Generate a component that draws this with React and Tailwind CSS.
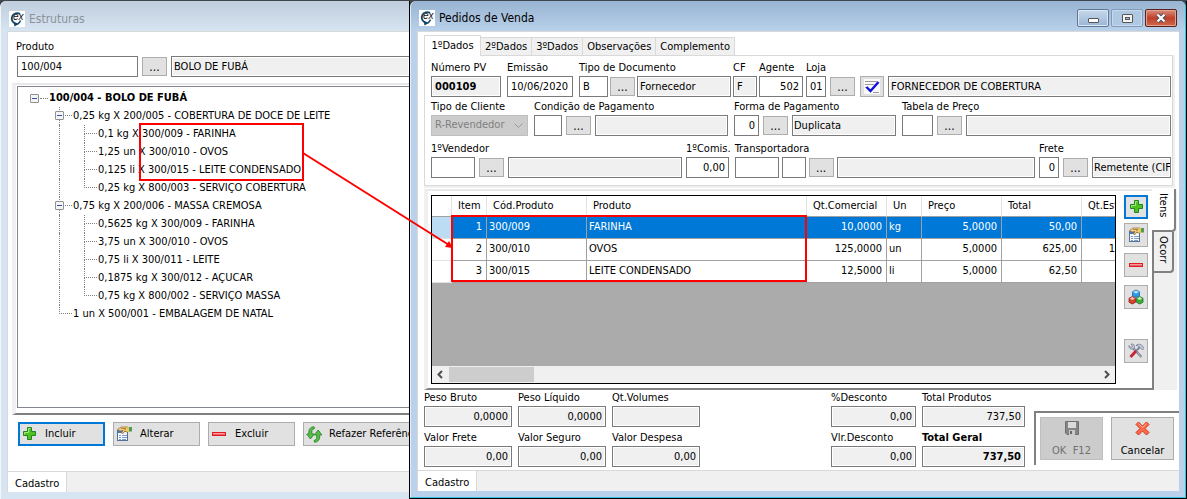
import React, { useId } from 'react';

const tree = [
  { level: 1, open: true, text: '0,25 kg X 200/005 - COBERTURA DE DOCE DE LEITE' },
  { level: 2, text: '0,1 kg X 300/009 - FARINHA' },
  { level: 2, text: '1,25 un X 300/010 - OVOS' },
  { level: 2, text: '0,125 li X 300/015 - LEITE CONDENSADO' },
  { level: 2, last: true, text: '0,25 kg X 800/003 - SERVIÇO COBERTURA' },
  { level: 1, open: true, text: '0,75 kg X 200/006 - MASSA CREMOSA' },
  { level: 2, text: '0,5625 kg X 300/009 - FARINHA' },
  { level: 2, text: '3,75 un X 300/010 - OVOS' },
  { level: 2, text: '0,75 li X 300/011 - LEITE' },
  { level: 2, text: '0,1875 kg X 300/012 - AÇUCAR' },
  { level: 2, last: true, text: '0,75 kg X 800/002 - SERVIÇO MASSA' },
  { level: 1, last: true, text: '1 un X 500/001 - EMBALAGEM DE NATAL' },
];

const items = [
  { item: 1, cod: '300/009', produto: 'FARINHA', qt: '10,0000', un: 'kg', preco: '5,0000', total: '50,00', est: '' },
  { item: 2, cod: '300/010', produto: 'OVOS', qt: '125,0000', un: 'un', preco: '5,0000', total: '625,00', est: '1' },
  { item: 3, cod: '300/015', produto: 'LEITE CONDENSADO', qt: '12,5000', un: 'li', preco: '5,0000', total: '62,50', est: '' },
];

/* ---------- icons ---------- */

function LogoIcon() {
  return (
    <svg width="16" height="16" viewBox="0 0 16 16" className="shrink-0 bg-white">
      <path d="M11 2.800A5.300 5.300 0 1 0 5.500 12.300" fill="none" stroke="#12466b" strokeWidth="1.800" />
      <path d="M4.500 10.500 10 13l-4.500 2.500z" fill="#12466b" />
      <path d="M11.500 9.500a5 5 0 0 1-3 3.500" fill="none" stroke="#12466b" strokeWidth="1.400" />
      <text x="4" y="9" fontSize="10" fontStyle="italic" fontFamily="Liberation Sans, sans-serif" fill="#111">ex</text>
    </svg>
  );
}

function PlusIcon() {
  return (
    <svg width="16" height="16" viewBox="0 0 16 16" className="shrink-0">
      <path d="M6.500 1.500h4v4h4v4h-4v4h-4v-4h-4v-4h4z" fill="#4fc21f" stroke="#1f8423" />
      <path d="M7.500 2.500h2M7.500 2.500v4h-4v2" fill="none" stroke="#a5e884" />
    </svg>
  );
}

function MinusIcon() {
  return (
    <svg width="16" height="16" viewBox="0 0 16 16" className="shrink-0">
      <rect x="1.500" y="6.500" width="13" height="3" fill="#f4606a" stroke="#e01b24" />
      <path d="M2 7.500h12" stroke="#ff9ca0" />
    </svg>
  );
}

function EditIcon() {
  return (
    <svg width="16" height="16" viewBox="0 0 16 16" className="shrink-0">
      <rect x="1.500" y="5.500" width="10" height="9" fill="#f4f8ff" stroke="#5a6f96" />
      <rect x="1" y="4" width="7" height="3" fill="#4a75b5" />
      <path d="M3 9.500h2M3 11.500h2M6 9.500h5M6 11.500h5M6 13.500h4M3 13.500h2" stroke="#7d9ccb" />
      <path d="M1.500 3.500 5 1h7v4.500L10.500 6 9 5 6.500 8 5.500 7 7 4.500 4 5z" fill="#f2d08c" />
      <path d="M1.500 3.500 5 1h7M12 5.500 10.500 6 9 5 6.500 8 5.500 7 7 4.500 4 5 1.500 3.500" fill="none" stroke="#8f6a26" strokeWidth=".7" />
      <path d="m5 3 1-1 1 1 1-1 1 1 1-1M8 4l2-1" fill="none" stroke="#8a5a1c" strokeWidth=".6" />
      <path d="M13 1h3v4.500h-3z" fill="#4d9a63" />
      <path d="M12 1v5" stroke="#f4c61f" strokeWidth="1.600" />
    </svg>
  );
}

function RefreshIcon() {
  return (
    <svg width="17" height="17" viewBox="0 0 17 17" className="shrink-0">
      <path d="M8 .8C4.500 .8 2.500 3 2.800 8H.7L4.400 13l4-5H6C5.500 5 6 3 8.500 2.500z" fill="#55bd45" stroke="#27802a" strokeWidth=".8" />
      <path d="M8.500 16.200c3.500 0 5.500-2.200 5.200-7.200h2.200l-3.700-5-4 5h2.400c.5 3-.1 5-2.600 5.500z" fill="#55bd45" stroke="#27802a" strokeWidth=".8" />
    </svg>
  );
}

function CubesIcon() {
  return (
    <svg width="16" height="16" viewBox="0 0 16 16" className="shrink-0">
      <path d="m8 1 3.500 1.800v4L8 8.500 4.500 6.800v-4z" fill="#2d9bea" stroke="#1766a8" strokeWidth=".8" />
      <path d="m8 1.500 3 1.500-3 1.500L5 3z" fill="#b5e2ff" />
      <path d="m4.300 7.500 3.300 1.800v3.900L4.300 15 1 13.200V9.300z" fill="#d9412c" stroke="#8e2016" strokeWidth=".8" />
      <path d="m4.300 8 2.700 1.400-2.700 1.500-2.700-1.500z" fill="#ffc2b5" />
      <path d="m11.700 7.500 3.300 1.800v3.900L11.700 15l-3.300-1.800V9.300z" fill="#38ae39" stroke="#1a701f" strokeWidth=".8" />
      <path d="m11.700 8 2.700 1.400-2.700 1.500L9 9.400z" fill="#c2f2b5" />
    </svg>
  );
}

function ToolsIcon() {
  return (
    <svg width="16" height="16" viewBox="0 0 16 16" className="shrink-0">
      <path d="m4 4 9.500 10" stroke="#66718a" strokeWidth="2.200" />
      <path d="m4 4 9.500 10" stroke="#d5dbe5" strokeWidth=".8" />
      <path d="M1 2.500 3 4.500 4.500 3 3 1c2-.5 4 1 3.500 3.500L4.500 6C2.500 6.500 .5 5 1 2.500z" fill="#c5cddb" stroke="#66718a" strokeWidth=".7" />
      <path d="m12 4-4.500 4.500" stroke="#7c879c" strokeWidth="2" />
      <path d="M8 8 2.500 14" stroke="#ca2432" strokeWidth="2.800" />
      <path d="M8 2.500C10 .5 13 1 14.500 3L16 5.500 14.500 7 12 4.500 10.500 3z" fill="#c5cddb" stroke="#66718a" strokeWidth=".7" />
    </svg>
  );
}

function CheckIcon() {
  return (
    <svg width="16" height="15" viewBox="0 0 16 15" className="shrink-0">
      <rect width="16" height="15" fill="#fafafa" />
      <path d="M1 2.500h12M1 5.500h9M1 8.500h3M9 13.500h6" stroke="#9a9a9a" />
      <path d="m2.500 8 4 4L14.500 3" fill="none" stroke="#1111dd" strokeWidth="2.400" />
    </svg>
  );
}

function SaveIcon() {
  return (
    <svg width="14" height="14" viewBox="0 0 14 14">
      <path d="M.5.5h13v13H2L.5 12z" fill="#858585" stroke="#707070" />
      <rect x="3" y="1" width="8" height="6" fill="#dadada" />
      <rect x="4" y="9" width="6" height="5" fill="#c9c9c9" />
      <rect x="5" y="10" width="2" height="3" fill="#666" />
    </svg>
  );
}

function CancelIcon() {
  return (
    <svg width="15" height="15" viewBox="0 0 15 15">
      <path d="m3.500 1 4 4 4-4L14 3.500l-4 4 4 4-2.500 2.500-4-4-4 4L1 11.500l4-4-4-4z" fill="#fb6a4c" stroke="#d8331c" />
      <path d="m3.500 2.500 4 4 4-4" fill="none" stroke="#ffb19a" />
    </svg>
  );
}

/* ---------- form pieces ---------- */

const inputBase = 'h-[21px] min-w-0 border border-[#7a7a7a] px-[3px] text-[11px] leading-4 outline-none';

function Box({ className = '', gray, ...props }) {
  return (
    <input
      type="text"
      readOnly={gray}
      className={`${inputBase} ${gray ? 'bg-[#f0f0f0] shadow-[inset_0_0_0_1px_#fff]' : 'bg-white'} ${className}`}
      {...props}
    />
  );
}

function Dots({ label, className = '' }) {
  return (
    <button type="button" aria-label={label} className={`h-[19px] w-[25px] shrink-0 border border-[#adadad] bg-[#e1e1e1] text-[12px] leading-4 ${className}`}>
      ...
    </button>
  );
}

function Field({ label, value = '', gray, w, className = '', gap = 'gap-1', bold, boldLabel, right, children }) {
  const id = useId();
  return (
    <div className={`flex flex-col ${className}`}>
      <label htmlFor={id} className={`h-4 whitespace-nowrap leading-4 ${boldLabel ? 'font-bold' : ''}`}>
        {label}
      </label>
      <div className={`flex items-center ${gap}`}>
        <Box id={id} defaultValue={value} gray={gray} className={`shrink-0 ${w} ${bold ? 'font-bold' : ''} ${right ? 'text-right' : ''}`} />
        {children}
      </div>
    </div>
  );
}

function SideButton({ label, active, className = '', children }) {
  return (
    <button
      type="button"
      aria-label={label}
      className={`flex h-6 w-6 items-center justify-center bg-[#e1e1e1] ${active ? 'border-2 border-[#0078d7]' : 'border border-[#adadad]'} ${className}`}
    >
      {children}
    </button>
  );
}

function ActionButton({ label, active, children }) {
  return (
    <button
      type="button"
      className={`flex h-6 w-[87px] shrink-0 items-center gap-2 whitespace-nowrap bg-[#e1e1e1] ${active ? 'border-2 border-[#0078d7] px-[1px]' : 'border border-[#adadad] px-[2px]'}`}
    >
      {children}
      {label}
    </button>
  );
}

function BottomTab() {
  return (
    <div className="flex h-[21px] border-t border-[#d9d9d9] bg-[#f0f0f0]">
      <button type="button" className="border-r border-[#d9d9d9] bg-white px-[7px] pt-1 leading-4">Cadastro</button>
    </div>
  );
}

/* ---------- tree ---------- */

function Toggle({ className = '' }) {
  return (
    <button type="button" aria-label="Recolher" className={`flex h-[9px] w-[9px] shrink-0 items-center justify-center rounded-[1px] border border-[#919191] bg-[#f4f4f4] ${className}`}>
      <span className="h-px w-[5px] bg-[#3b4fa8]" />
    </button>
  );
}

function TreeRow({ node }) {
  return (
    <li className="flex h-[18px] items-center whitespace-nowrap pl-[41px]">
      {node.level === 2 && <span className="h-full w-[25px] shrink-0 border-l border-dotted border-[#808080]" />}
      <span className="relative flex h-full w-[13px] shrink-0 flex-col">
        <span className="h-[9px] border-b border-l border-dotted border-[#808080]" />
        <span className={`h-[9px] border-dotted border-[#808080] ${node.last ? '' : 'border-l'}`} />
        {node.open && <Toggle className="absolute -left-1 top-1" />}
      </span>
      <span className="pl-px">{node.text}</span>
    </li>
  );
}

function Estruturas() {
  return (
    <section className="flex min-w-0 flex-col overflow-hidden rounded-tl-md border-l border-[#f2f6fa] bg-[#d7e4f2] pb-[7px] pl-[6px]">
      <header className="-ml-[6px] flex h-[30px] shrink-0 items-center gap-1 bg-linear-to-b from-[#bfcddc] to-[#d7e4f2] pl-2 pt-[6px] text-[12px] text-[#8b929a]">
        <LogoIcon />
        Estruturas
      </header>
      <div className="flex flex-1 flex-col border-l border-t border-[#d9d9d9] bg-white">
        <div className="flex flex-col pl-2 pt-[7px]">
          <label htmlFor="produto" className="h-[17px] leading-4">Produto</label>
          <div className="flex items-center gap-1 pl-px">
            <Box id="produto" defaultValue="100/004" className="w-[121px] shrink-0" />
            <Dots label="Buscar produto" />
            <Box aria-label="Descrição do produto" gray defaultValue="BOLO DE FUBÁ" className="flex-1 border-r-0 pl-[2px]" />
          </div>
        </div>
        <div className="ml-1 mt-[6px] flex flex-1 flex-col border-b-2 border-l-4 border-t-2 border-b-[#808080] border-l-[#f0f0f0] border-t-[#e8e8e8] pb-[5px] pl-px pt-px">
          <ul className="flex-1 border-y border-l border-[#828790] pt-[2px]">
            <li className="flex h-[18px] items-center pl-3">
              <Toggle />
              <span className="ml-px h-px w-2 border-t border-dotted border-[#808080]" />
              <strong className="pl-px">100/004 - BOLO DE FUBÁ</strong>
            </li>
            {tree.map((node, i) => (
              <TreeRow key={i} node={node} />
            ))}
          </ul>
        </div>
        <div className="flex h-14 shrink-0 gap-2 overflow-hidden pl-[10px] pt-[7px]">
          <ActionButton label="Incluir" active><PlusIcon /></ActionButton>
          <ActionButton label="Alterar"><EditIcon /></ActionButton>
          <ActionButton label="Excluir"><MinusIcon /></ActionButton>
          <button type="button" className="flex h-6 w-[130px] shrink-0 items-center gap-[6px] whitespace-nowrap border border-[#adadad] bg-[#e1e1e1] px-[2px]">
            <RefreshIcon />
            Refazer Referências
          </button>
        </div>
        <BottomTab />
      </div>
    </section>
  );
}

/* ---------- order window ---------- */

function OrderForm() {
  return (
    <div className="mx-[6px] mt-[3px] shrink-0">
      <div className="flex items-end">
        {['1ºDados', '2ºDados', '3ºDados', 'Observações', 'Complemento'].map((tab, i) => (
          <button
            key={tab}
            type="button"
            className={
              i === 0
                ? 'z-10 -mb-px h-[21px] w-[57px] border border-b-0 border-[#d9d9d9] bg-white leading-4'
                : 'h-[18px] border-r border-t border-[#d9d9d9] bg-[#f0f0f0] px-1 leading-4'
            }
          >
            {tab}
          </button>
        ))}
      </div>
      <div className="flex flex-col gap-[2px] overflow-hidden border border-[#d9d9d9] pb-[7px] pl-[6px] pr-px pt-1 shadow-[1px_1px_0_1px_#f0f0f0]">
        <div className="flex gap-[2px]">
          <Field label="Número PV" value="000109" gray bold w="w-[70px]" />
          <Field label="Emissão" value="10/06/2020" w="w-[66px]" className="ml-1" />
          <Field label="Tipo de Documento" value="B" w="w-[29px]" className="ml-1" gap="gap-[2px]">
            <Dots label="Buscar tipo" />
            <Box aria-label="Tipo" gray defaultValue="Fornecedor" className="w-[94px] pl-[2px]" />
          </Field>
          <Field label="CF" value="F" gray w="w-[24px]" />
          <Field label="Agente" value="502" right w="w-[44px]" />
          <Field label="Loja" value="01" w="w-[20px]" className="ml-px min-w-0 flex-1">
            <Dots label="Buscar agente" />
            <button type="button" aria-label="Validar" className="ml-px flex h-[21px] w-6 shrink-0 items-center justify-center border border-[#adadad] bg-[#e1e1e1]">
              <CheckIcon />
            </button>
            <Box aria-label="Nome do agente" gray defaultValue="FORNECEDOR DE COBERTURA" className="flex-1 pl-[2px]" />
          </Field>
        </div>
        <div className="flex gap-[6px]">
          <div className="flex flex-col">
            <label htmlFor="cliente" className="h-4 leading-4">Tipo de Cliente</label>
            <div className="relative">
              <select id="cliente" disabled className="h-[21px] w-[97px] appearance-none border border-[#bfbfbf] bg-[#cccccc] px-[3px] text-[11px] text-[#808080] opacity-100">
                <option>R-Revendedor</option>
              </select>
              <svg width="9" height="6" viewBox="0 0 9 6" className="absolute right-[5px] top-2">
                <path d="m.5.5 4 4 4-4" fill="none" stroke="#999" />
              </svg>
            </div>
          </div>
          <Field label="Condição de Pagamento" w="w-[28px]">
            <Dots label="Buscar condição" />
            <Box aria-label="Condição" gray className="w-[133px]" />
          </Field>
          <Field label="Forma de Pagamento" value="0" right w="w-[25px]">
            <Dots label="Buscar forma" />
            <Box aria-label="Forma" gray defaultValue="Duplicata" className="w-[104px] pl-px" />
          </Field>
          <Field label="Tabela de Preço" w="w-[31px]" className="min-w-0 flex-1">
            <Dots label="Buscar tabela" />
            <Box aria-label="Tabela" gray className="flex-1" />
          </Field>
        </div>
        <div className="mt-[3px] flex gap-1">
          <Field label="1ºVendedor" w="w-[44px]">
            <Dots label="Buscar vendedor" />
            <Box aria-label="Nome do vendedor" gray className="w-[174px]" />
          </Field>
          <Field label="1ºComis." value="0,00" right w="w-[43px]" />
          <Field label="Transportadora" w="w-[44px]" className="min-w-0 flex-1" gap="gap-[3px]">
            <Box aria-label="Loja da transportadora" className="w-[24px] shrink-0" />
            <Dots label="Buscar transportadora" />
            <Box aria-label="Nome da transportadora" gray className="flex-1" />
          </Field>
          <Field label="Frete" value="0" right w="w-[20px]">
            <Dots label="Buscar frete" />
            <Box aria-label="Frete por conta" gray defaultValue="Remetente (CIF)" className="w-[79px] pl-px pr-0" />
          </Field>
        </div>
      </div>
    </div>
  );
}

function ItemsTable() {
  const th = 'overflow-hidden whitespace-nowrap border-b border-r border-b-[#a0a0a0] border-r-[#e2e2e2] px-[6px] text-left font-normal';
  const td = 'overflow-hidden whitespace-nowrap border-b border-r border-[#a0a0a0] pl-[2px] pr-1';
  return (
    <div className="flex min-w-0 flex-1 flex-col overflow-hidden border border-black bg-[#ababab]">
      <table className="w-full table-fixed border-separate border-spacing-0 bg-white">
        <colgroup>
          <col className="w-[20px]" />
          <col className="w-[35px]" />
          <col className="w-[100px]" />
          <col className="w-[220px]" />
          <col className="w-[80px]" />
          <col className="w-[35px]" />
          <col className="w-[80px]" />
          <col className="w-[80px]" />
          <col />
        </colgroup>
        <thead>
          <tr className="h-[21px]">
            <th className={th} />
            <th className={th}>Item</th>
            <th className={th}>Cód.Produto</th>
            <th className={th}>Produto</th>
            <th className={th}>Qt.Comercial</th>
            <th className={th}>Un</th>
            <th className={th}>Preço</th>
            <th className={th}>Total</th>
            <th className="overflow-hidden whitespace-nowrap border-b border-[#a0a0a0] pl-[6px] text-left font-normal">Qt.Estoque</th>
          </tr>
        </thead>
        <tbody>
          {items.map((row, i) => (
            <tr key={row.item} className={`h-[22px] ${i === 0 ? 'bg-[#0078d7] text-white' : ''}`}>
              <td className={`border-b border-r border-[#e2e2e2] ${i === 0 ? 'bg-[#bcdcf4]' : ''}`} />
              <td className={`${td} text-right`}>{row.item}</td>
              <td className={td}>{row.cod}</td>
              <td className={td}>{row.produto}</td>
              <td className={`${td} text-right`}>{row.qt}</td>
              <td className={td}>{row.un}</td>
              <td className={`${td} text-right`}>{row.preco}</td>
              <td className={`${td} text-right`}>{row.total}</td>
              <td className="overflow-hidden border-b border-[#a0a0a0] text-right">{row.est}</td>
            </tr>
          ))}
        </tbody>
      </table>
      <div className="mt-auto flex h-[17px] items-center bg-[#f0f0f0]">
        <svg width="17" height="17" viewBox="0 0 17 17">
          <path d="M10 5 6.500 8.500 10 12" fill="none" stroke="#505050" strokeWidth="2" />
        </svg>
        <div className="h-[15px] w-[85px] bg-[#cdcdcd]" />
        <svg width="17" height="17" viewBox="0 0 17 17" className="ml-auto">
          <path d="m7 5 3.500 3.500L7 12" fill="none" stroke="#505050" strokeWidth="2" />
        </svg>
      </div>
    </div>
  );
}

function PedidosDeVenda() {
  return (
    <section className="flex min-w-0 flex-col border-b border-l border-r border-black">
      <div className="flex flex-1 flex-col rounded-t-md border-b border-l border-r border-b-[#35c4e0] border-l-[#e4eef8] border-r-[#35c4e0] bg-[#b9d1ea] px-[6px] pb-[6px]">
        <header className="-mx-[6px] flex h-[30px] shrink-0 items-center rounded-t-md bg-linear-to-b from-[#98b4d2] to-[#b9d1ea] pl-2 pr-2 pt-1 text-[12px]">
          <LogoIcon />
          <h1 className="flex-1 pl-1">Pedidos de Venda</h1>
          <div className="flex gap-[2px]">
            <button type="button" aria-label="Minimizar" className="flex h-[18px] w-8 items-center justify-center rounded-[2px] border border-[#5f7795] bg-linear-to-b from-[#c6d8ea] to-[#9ab6d4] shadow-[inset_0_0_0_1px_#dbe8f5]">
              <span className="mt-1 h-[5px] w-[11px] rounded-[1px] border border-[#555] bg-white" />
            </button>
            <button type="button" aria-label="Maximizar" className="flex h-[18px] w-8 items-center justify-center rounded-[2px] border border-[#7f9abb] bg-[#b0c9e3] shadow-[inset_0_0_0_1px_#c8dbee]">
              <span className="flex h-[9px] w-[11px] items-center justify-center rounded-[1px] border border-[#555] bg-[#f4f4f4]">
                <span className="h-[3px] w-[5px] border border-[#555] bg-[#a9c0da]" />
              </span>
            </button>
            <button type="button" aria-label="Fechar" className="flex h-[18px] w-8 items-center justify-center rounded-[2px] border border-[#5b1f1c] bg-linear-to-b from-[#d98d7d] via-[#bd3f28] to-[#cf6a4b] shadow-[inset_0_0_0_1px_#e0a394]">
              <svg width="12" height="10" viewBox="0 0 12 10">
                <path d="m2.500 1.500 7 7M9.500 1.500l-7 7" stroke="#4c4c5a" strokeWidth="4" />
                <path d="m2.500 1.500 7 7M9.500 1.500l-7 7" stroke="#fff" strokeWidth="2.200" />
              </svg>
            </button>
          </div>
        </header>
        <div className="flex flex-1 flex-col border-l border-t border-[#d9d9d9] bg-white">
          <OrderForm />
          <div className="ml-[6px] mr-[2px] mt-[3px] flex flex-1">
            <div className="flex min-w-0 flex-1 gap-2 border-b-2 border-l-4 border-r-2 border-t-2 border-b-[#808080] border-l-[#f0f0f0] border-r-[#808080] border-t-[#e8e8e8] pb-[4px] pl-[3px] pr-1 pt-1">
              <ItemsTable />
              <div className="flex flex-col">
                <SideButton label="Incluir item" active><PlusIcon /></SideButton>
                <SideButton label="Alterar item" className="mt-1"><EditIcon /></SideButton>
                <SideButton label="Excluir item" className="mt-[6px]"><MinusIcon /></SideButton>
                <SideButton label="Estruturas" className="mt-2"><CubesIcon /></SideButton>
                <SideButton label="Ferramentas" className="mt-[30px]"><ToolsIcon /></SideButton>
              </div>
            </div>
            <div className="flex w-[23px] flex-col items-start bg-[#f0f0f0]">
              <button type="button" className="-ml-[2px] h-[43px] w-6 rounded-br border-b-2 border-r-2 border-[#808080] bg-white pb-2 [writing-mode:vertical-rl]">Itens</button>
              <button type="button" className="h-[41px] w-5 rounded-br border-b-2 border-r-2 border-[#808080] bg-[#f0f0f0] pb-1 [writing-mode:vertical-rl]">Ocorr</button>
            </div>
          </div>
          <div className="flex h-20 shrink-0 pl-[6px]">
            <div className="grid grid-cols-[88px_88px_88px] content-start gap-x-[6px] gap-y-[3px] pr-4">
              <Field label="Peso Bruto" value="0,0000" gray right w="w-full" />
              <Field label="Peso Líquido" value="0,0000" gray right w="w-full" />
              <Field label="Qt.Volumes" gray right w="w-full" />
              <Field label="Valor Frete" value="0,00" gray right w="w-full" />
              <Field label="Valor Seguro" value="0,00" gray right w="w-full" />
              <Field label="Valor Despesa" value="0,00" gray right w="w-full" />
            </div>
            <div className="ml-auto grid grid-cols-[85px_103px] content-start gap-x-[6px] gap-y-[3px]">
              <Field label="%Desconto" value="0,00" gray right w="w-full" />
              <Field label="Total Produtos" value="737,50" gray right w="w-full" />
              <Field label="Vlr.Desconto" value="0,00" gray right w="w-full" />
              <Field label="Total Geral" value="737,50" gray right bold boldLabel w="w-full" />
            </div>
            <div className="ml-[9px] mt-[21px] flex h-[54px] gap-2 border-l-2 border-t-2 border-[#808080] pl-1 pr-[5px] pt-1">
              <button type="button" disabled className="flex h-[43px] w-[63px] flex-col items-center justify-between border border-[#bfbfbf] bg-[#cccccc] pt-[3px] leading-4 text-[#707070]">
                <SaveIcon />
                <span className="whitespace-pre">OK  F12</span>
              </button>
              <button type="button" className="flex h-[43px] w-[63px] flex-col items-center justify-between border border-[#adadad] bg-[#e1e1e1] pt-[3px] leading-4">
                <CancelIcon />
                Cancelar
              </button>
            </div>
          </div>
          <BottomTab />
        </div>
      </div>
    </section>
  );
}

export default function App() {
  return (
    <div className="relative grid min-h-screen grid-cols-[minmax(0,409fr)_minmax(0,778fr)] bg-[#3f464e] pt-px font-['DejaVu_Sans_Condensed','Noto_Sans',sans-serif] text-[11px] text-black">
      <Estruturas />
      <PedidosDeVenda />
      {/* highlight linking the structure components to the order items */}
      <svg width="810" height="290" viewBox="0 0 810 290" className="pointer-events-none absolute left-0 top-0">
        <rect x="140" y="124" width="163" height="56" fill="none" stroke="#f00" strokeWidth="2" />
        <rect x="452" y="216" width="354" height="65" fill="none" stroke="#f00" strokeWidth="2" />
        <path d="M303 153 449 245" stroke="#f00" strokeWidth="2" />
        <path d="m453 248-8-1 4-6z" fill="#f00" />
      </svg>
    </div>
  );
}
